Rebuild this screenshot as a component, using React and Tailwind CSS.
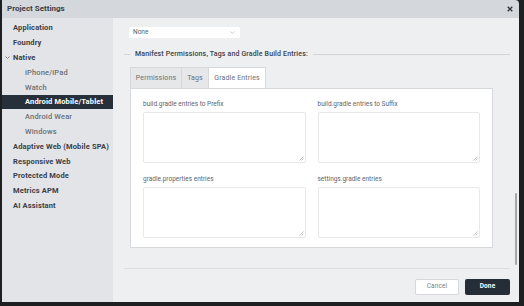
import React from "react";

const sideItems = [
  { label: "Application", level: 0 },
  { label: "Foundry", level: 0 },
  { label: "Native", level: 0, open: true },
  { label: "iPhone/iPad", level: 1 },
  { label: "Watch", level: 1 },
  { label: "Android Mobile/Tablet", level: 1, active: true },
  { label: "Android Wear", level: 1 },
  { label: "Windows", level: 1 },
  { label: "Adaptive Web (Mobile SPA)", level: 0 },
  { label: "Responsive Web", level: 0 },
  { label: "Protected Mode", level: 0 },
  { label: "Metrics APM", level: 0 },
  { label: "AI Assistant", level: 0 },
];

const SideItem = ({ item }) => {
  let cls = "relative flex items-center h-[14.8px] text-[7.5px] tracking-[0.15px] ";
  if (item.active) {
    cls += "bg-[#27303a] text-white font-bold pl-[23px]";
  } else if (item.level === 1) {
    cls += "text-[#6a6f75] font-medium pl-[23px]";
  } else {
    cls += "text-[#3b4047] font-bold pl-[11px]";
  }
  return (
    <div className={cls}>
      {item.open && (
        <svg
          className="absolute left-[3px] top-[6px]"
          width="5"
          height="3"
          viewBox="0 0 5 3"
          fill="none"
        >
          <path d="M0.5 0.5 L2.5 2.5 L4.5 0.5" stroke="#6a6f75" strokeWidth="0.8" />
        </svg>
      )}
      <span>{item.label}</span>
    </div>
  );
};

// resize grip drawn in the corner, like the browser's textarea handle
const Grip = () => (
  <svg
    className="absolute right-[1px] bottom-[1px]"
    width="5"
    height="5"
    viewBox="0 0 5 5"
    fill="none"
  >
    <path d="M4.5 0.5 L0.5 4.5 M4.5 2.5 L2.5 4.5" stroke="#a9adb2" strokeWidth="0.7" />
  </svg>
);

const GradleField = ({ label }) => (
  <div className="flex flex-col">
    <div className="h-[12px] flex items-center text-[6.5px] text-[#60656b]">
      {label}
    </div>
    <div className="relative mt-[1px] h-[51px] w-full bg-white border border-[#e6e8eb] rounded-[2px]">
      <Grip />
    </div>
  </div>
);

const App = () => {
  return (
    <div
      className="w-[524px] h-[306px] bg-[#1e1f21] pl-[2px] pr-[5px] pb-[4px] flex"
      style={{ fontFamily: "Roboto, 'Liberation Sans', sans-serif" }}
    >
      <div className="flex-1 flex flex-col rounded-tr-[4px] overflow-hidden">
        {/* Title bar */}
        <div className="h-[18px] shrink-0 bg-[#d4d7db] flex items-center justify-between pl-[5px] pr-[6px]">
          <span className="text-[8px] font-bold text-[#3b4047]">
            Project Settings
          </span>
          <svg width="6" height="6" viewBox="0 0 6 6">
            <path d="M0.7 0.7 L5.3 5.3 M5.3 0.7 L0.7 5.3" stroke="#2f343a" strokeWidth="1.3" />
          </svg>
        </div>

        <div className="flex flex-1">
          {/* Sidebar */}
          <div className="w-[111px] shrink-0 bg-[#e3e4e7] pt-[2.6px]">
            {sideItems.map((item) => (
              <SideItem key={item.label} item={item} />
            ))}
          </div>

          {/* Main */}
          <div className="relative flex-1 bg-[#eeeff1] flex flex-col pl-[11px] pr-[9px]">
            <div className="mt-[9px] ml-[5px] w-[111px] h-[11px] bg-white rounded-[2px] flex items-center justify-between pl-[4px] pr-[5px]">
              <span className="text-[6.5px] text-[#5a5f65]">None</span>
              <svg width="5" height="3" viewBox="0 0 5 3" fill="none">
                <path d="M0.5 0.5 L2.5 2.5 L4.5 0.5" stroke="#b5b8bc" strokeWidth="0.7" />
              </svg>
            </div>

            <div className="mt-[11px] h-[10px] flex items-center">
              <div className="w-[6px] h-px bg-[#d3d5d8]" />
              <span className="ml-[5px] text-[7px] font-medium text-[#3b4047] tracking-[0.15px]">
                Manifest Permissions, Tags and Gradle Build Entries:
              </span>
              <div className="ml-[5px] flex-1 h-px bg-[#d3d5d8]" />
            </div>

            <div className="mt-[8px] ml-[6px] w-[363px]">
              <div className="flex h-[21px]">
                <div className="w-[52px] bg-[#e6e7e9] border border-[#d6d8db] border-b-0 flex items-center justify-center text-[7px] tracking-[0.15px] text-[#6a6f75]">
                  Permissions
                </div>
                <div className="w-[27px] bg-[#e6e7e9] border-t border-r border-[#d6d8db] flex items-center justify-center text-[7px] tracking-[0.15px] text-[#6a6f75]">
                  Tags
                </div>
                <div className="w-[57px] bg-white border-t border-r border-[#d6d8db] flex items-center justify-center text-[7px] tracking-[0.15px] text-[#6a6f75]">
                  Gradle Entries
                </div>
              </div>
              <div className="h-[160px] bg-white border border-[#d6d8db] px-[12px] pt-[10px] grid grid-cols-2 gap-x-[12px] gap-y-[11px] content-start">
                <GradleField label="build.gradle entries to Prefix" />
                <GradleField label="build.gradle entries to Suffix" />
                <GradleField label="gradle.properties entries" />
                <GradleField label="settings.gradle entries" />
              </div>
            </div>

            <div className="mt-[20px] h-px bg-[#dcdee1]" />

            <div className="mt-[10px] flex justify-end gap-[6px]">
              <button className="w-[44px] h-[16px] bg-white border border-[#d6d8db] rounded-[2px] text-[6.5px] text-[#7a7f85] tracking-[0.15px]">
                Cancel
              </button>
              <button className="w-[45px] h-[16px] bg-[#252d37] rounded-[2px] text-[6.5px] font-bold text-white tracking-[0.15px]">
                Done
              </button>
            </div>

            <div className="absolute right-[2px] top-[175px] w-[2px] h-[72px] rounded-full bg-[#a3a6aa]" />
          </div>
        </div>
      </div>
    </div>
  );
};

export default App;
